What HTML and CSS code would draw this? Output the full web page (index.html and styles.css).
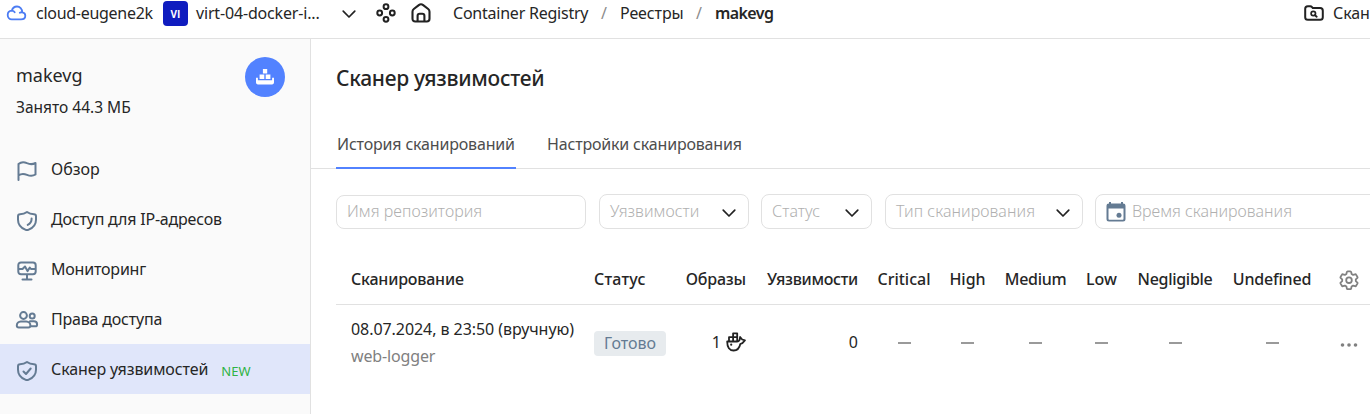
FILE: index.html
```html
<!DOCTYPE html>
<html lang="ru">
<head>
<meta charset="utf-8">
<title>Сканер уязвимостей</title>
<link rel="stylesheet" href="styles.css">
</head>
<body>
<svg class="defs" width="0" height="0">
  <symbol id="chevron" viewBox="0 0 16 16"><path d="M2.200 5.200L8 11l5.800-5.800" fill="none" stroke="#222" stroke-width="1.700" stroke-linecap="round" stroke-linejoin="round"/></symbol>
</svg>
<header class="topbar">
  <svg class="icon cloud" viewBox="0 0 20 16"><path d="M5.200 14.300h9.300c2.600 0 4.300-1.500 4.300-3.600 0-1.900-1.300-3.200-3.100-3.400C15.700 3.800 13.400 1.500 10.500 1.500 8 1.500 6 3 5.300 5.700 2.900 5.900 1.200 7.700 1.200 10c0 2.500 1.700 4.300 4 4.300zM5.300 5.700c1.200 0 2.200.5 2.900 1.500M15.700 7.300c-.9-.1-1.700.1-2.400.5" fill="none" stroke="#4c7cf3" stroke-width="1.800" stroke-linecap="round"/></svg>
  <span class="org">cloud-eugene2k</span>
  <span class="badge">VI</span>
  <span class="folder">virt-04-docker-i...</span>
  <svg class="icon top-chevron"><use href="#chevron"/></svg>
  <svg class="icon services" viewBox="0 0 20 20"><g fill="none" stroke="#222" stroke-width="2"><circle cx="10" cy="3.700" r="2.400"/><circle cx="3.700" cy="10" r="2.400"/><circle cx="16.300" cy="10" r="2.400"/><circle cx="10" cy="16.300" r="2.400"/></g></svg>
  <svg class="icon home" viewBox="0 0 20 20"><path d="M1.500 8.800c0-1.200.4-2.100 1.300-2.800l5-3.900c1.300-1 3.100-1 4.400 0l5 3.900c.9.700 1.300 1.600 1.300 2.800v7c0 1.700-1 2.700-2.700 2.700H4.200c-1.700 0-2.700-1-2.700-2.700zM6.600 18.300v-5.500c0-1.300.8-2.100 2.100-2.100h2.600c1.300 0 2.100.8 2.100 2.100v5.500" fill="none" stroke="#222" stroke-width="2.100"/></svg>
  <nav class="crumbs">
    <span class="crumb-service">Container Registry</span><i>/</i><span class="crumb-list">Реестры</span><i>/</i><b>makevg</b>
  </nav>
  <a class="scan">
    <svg class="icon scan-icon" viewBox="0 0 20 16"><path d="M1.200 3.800c0-1.700.9-2.600 2.600-2.600h2.400c.8 0 1.300.3 1.800.9l.8 1h7.400c1.700 0 2.600.9 2.600 2.600v6.500c0 1.700-.9 2.600-2.600 2.600H3.800c-1.700 0-2.600-.9-2.600-2.600z" fill="none" stroke="#222" stroke-width="2"/><circle cx="9.300" cy="8.500" r="2.200" fill="none" stroke="#222" stroke-width="1.700"/><path d="M11 10.200l1.700 1.500" stroke="#222" stroke-width="1.900" stroke-linecap="round"/></svg>
    <span>Скан</span>
  </a>
</header>
<div class="layout">
  <aside class="sidebar">
    <div class="registry">
      <div>
        <div class="registry-name">makevg</div>
        <div class="registry-size">Занято 44.3 МБ</div>
      </div>
      <div class="registry-logo"><svg viewBox="0 0 18 16" width="18" height="16"><path fill="#fff" d="M6.900 0h4.300v4.400H6.900zM3.600 5.600h4.700V10H3.600zM9.700 5.600h4.700V10H9.700zM0 8.800h1.900v2.400h14.200V8.800H18v4.500c0 1.300-.7 2.200-2 2.200H2c-1.300 0-2-.9-2-2.200z"/></svg></div>
    </div>
    <nav class="menu">
      <a class="item"><svg class="icon" viewBox="0 0 20 20"><path d="M1.500 19V3C4 .9 7 .8 10 2.200c3 1.300 5.900 1.200 8.500-.2v11.500c-2.600 1.700-5.500 1.700-8.500.3-3-1.300-6-1.200-8.500.5"/></svg><span class="m1">Обзор</span></a>
      <a class="item"><svg class="icon" viewBox="0 0 20 20"><path d="M10 1c2 1.500 4.500 2.200 7 2.200 1.300 0 2 .8 2 2v3.500c0 4.800-3.200 8.200-7.300 10a4 4 0 0 1-3.400 0C4.200 16.900 1 13.500 1 8.700V5.200c0-1.200.7-2 2-2C5.500 3.200 8 2.500 10 1zM14.600 7.500c.1 2.900-1.300 5-3.900 6.400"/></svg><span>Доступ для IP-адресов</span></a>
      <a class="item"><svg class="icon" viewBox="0 0 20 20"><path d="M4 1.500h12c1.700 0 2.700 1 2.700 2.700v6.300c0 1.700-1 2.700-2.700 2.700H4c-1.700 0-2.700-1-2.700-2.700V4.200c0-1.700 1-2.700 2.700-2.700zM1.500 8h4L8 5.500l2.500 4.600 2.300-3.600L14 8h4.500M10 13.200v5.300M5.500 18.500h9"/></svg><span>Мониторинг</span></a>
      <a class="item"><svg class="icon people" viewBox="0 0 22 18"><circle cx="7.500" cy="4.500" r="3.400"/><circle cx="16.200" cy="5" r="2.500"/><path d="M4.800 10.500h5.400c2.500 0 4.200 1.900 4.200 4 0 1.300-.8 2-2 2H2.800c-1.200 0-2-.7-2-2 0-2.100 1.600-4 4-4zM14 10.200h3.800c2 0 3.300 1.500 3.300 3.200 0 1.200-.7 1.900-1.800 1.900h-4.500"/></svg><span>Права доступа</span></a>
      <a class="item active"><svg class="icon" viewBox="0 0 20 20"><path d="M10 1c2 1.500 4.500 2.200 7 2.200 1.300 0 2 .8 2 2v3.500c0 4.800-3.200 8.200-7.300 10a4 4 0 0 1-3.400 0C4.200 16.900 1 13.500 1 8.700V5.200c0-1.200.7-2 2-2C5.500 3.200 8 2.500 10 1zM6.500 10.500L9 13l4.700-5.500"/></svg><span class="m5">Сканер уязвимостей</span><em>NEW</em></a>
    </nav>
  </aside>
  <main class="main">
    <h1>Сканер уязвимостей</h1>
    <div class="tabs">
      <a class="tab tab-active">История сканирований</a>
      <a class="tab">Настройки сканирования</a>
    </div>
    <div class="filters">
      <div class="field repo"><span>Имя репозитория</span></div>
      <div class="field vuln"><span>Уязвимости</span><svg class="icon"><use href="#chevron"/></svg></div>
      <div class="field status"><span>Статус</span><svg class="icon"><use href="#chevron"/></svg></div>
      <div class="field type"><span>Тип сканирования</span><svg class="icon"><use href="#chevron"/></svg></div>
      <div class="field time"><svg class="calendar" viewBox="0 0 20 20"><path fill="#647b93" fill-rule="evenodd" d="M3 0h2v1.500h10V0h2v1.500c1.700 0 2.500.8 2.500 2.500v13c0 1.700-.8 2.500-2.500 2.500H3C1.300 19.500.5 18.700.5 17V4c0-1.700.8-2.500 2.500-2.500zM2.500 6.500V17c0 .5.200.7.700.7h13.600c.5 0 .7-.2.700-.7V6.500z"/><circle cx="13" cy="13.300" r="2.500" fill="#647b93"/></svg><span>Время сканирования</span></div>
    </div>
    <div class="table">
      <div class="row head">
        <div><span class="tight">Сканирование</span></div>
        <div><span class="loose">Статус</span></div>
        <div class="right"><span class="tight">Образы</span></div>
        <div class="right"><span class="tighter">Уязвимости</span></div>
        <div class="mid"><span>Critical</span></div>
        <div class="mid"><span>High</span></div>
        <div class="mid"><span class="tighter">Medium</span></div>
        <div class="mid"><span>Low</span></div>
        <div class="mid"><span class="tighter">Negligible</span></div>
        <div class="mid"><span class="tight">Undefined</span></div>
        <div class="mid"><svg class="gear" viewBox="0 0 20 20"><path d="M8.700 1.300h2.600c.5 0 .8.300.9.800l.4 1.900 1.500.9 1.900-.6c.5-.1.900 0 1.100.4l1.300 2.200c.2.400.2.900-.2 1.200l-1.400 1.300v1.700l1.400 1.300c.4.300.4.800.2 1.200l-1.300 2.200c-.2.400-.6.500-1.100.4l-1.900-.6-1.500.9-.4 1.900c-.1.500-.4.800-.9.800H8.700c-.5 0-.8-.3-.9-.8l-.4-1.900-1.500-.9-1.900.6c-.5.100-.9 0-1.100-.4l-1.300-2.200c-.2-.4-.2-.9.200-1.200l1.400-1.300V9.400L1.800 8.100c-.4-.3-.4-.8-.2-1.200l1.300-2.200c.2-.4.600-.5 1.100-.4l1.900.6L7.400 4l.4-1.900c.1-.5.400-.8.900-.8z"/><circle cx="10" cy="10.200" r="2.800"/></svg></div>
      </div>
      <div class="row body">
        <div class="scan-cell"><span class="date">08.07.2024, в 23:50 (вручную)</span><span class="image-name">web-logger</span></div>
        <div><span class="label">Готово</span></div>
        <div class="right images"><span>1</span><svg class="docker" viewBox="0 0 20 20"><g fill="none" stroke="#222" stroke-width="1.800" stroke-linejoin="round"><path d="M1.200 9.500h9.600c1.700 0 2.800-.8 3-2.300l.3-2.200 2.100 2.500 2.700.9-2.500 2.700-2.100.9c-.8 4-3.100 6.500-6.700 6.500-4 0-6.500-3.200-6.400-9z"/><path d="M3 9.300V5.200h8.200v4.100M7.100 9.300V1.300h4.100v4"/></g><circle cx="5.200" cy="12.700" r="1.100" fill="#222"/></svg></div>
        <div class="right"><span>0</span></div>
        <div class="mid"><i class="dash"></i></div>
        <div class="mid"><i class="dash"></i></div>
        <div class="mid"><i class="dash"></i></div>
        <div class="mid"><i class="dash"></i></div>
        <div class="mid"><i class="dash"></i></div>
        <div class="mid"><i class="dash"></i></div>
        <div class="mid"><svg class="dots" viewBox="0 0 18 4"><g fill="#808080"><circle cx="2.500" cy="2" r="1.800"/><circle cx="9" cy="2" r="1.800"/><circle cx="15.500" cy="2" r="1.800"/></g></svg></div>
      </div>
    </div>
  </main>
</div>
</body>
</html>
```
FILE: styles.css
```css
* { box-sizing: border-box; }
body {
  margin: 0;
  width: 1370px;
  height: 414px;
  overflow: hidden;
  background: #fff;
  color: #262626;
  font: 16px/20px "Noto Sans", "Open Sans", sans-serif;
  white-space: nowrap;
}
.defs { display: none; }
svg { display: block; flex: none; }
i, em { font-style: normal; }

.topbar { display: flex; align-items: center; height: 39px; padding: 0 0 12px 6px; border-bottom: 1px solid #e1e1e1; overflow: hidden; }
.cloud { width: 21px; height: 16px; }
.org { width: 118px; margin-left: 9px; letter-spacing: -0.28px; }
.badge { width: 25px; height: 25px; margin-left: 9px; border-radius: 4px; background: #0f1cbf; color: #fff; font-family: "Open Sans", sans-serif; font-size: 10px; font-weight: 700; line-height: 26px; text-align: center; }
.folder { width: 126px; margin-left: 8px; letter-spacing: -0.17px; }
.top-chevron { width: 16px; height: 16px; margin: 2px 0 0 19px; }
.services { width: 20px; height: 20px; margin-left: 19px; }
.home { width: 20px; height: 20px; margin: 0 0 0 15px; }
.crumbs { display: flex; margin-left: 22px; }
.crumbs i { width: 32px; color: #8c8c8c; text-align: center; }
.crumbs b { font-weight: 600; letter-spacing: -0.6px; }
.crumb-service { width: 135px; letter-spacing: -0.23px; }
.crumb-list { width: 63px; letter-spacing: -0.12px; }
.scan { display: flex; align-items: center; width: 66px; margin-left: auto; }
.scan-icon { width: 20px; height: 16px; margin-right: 9px; }
.scan span { letter-spacing: -0.1px; }

.layout { display: flex; height: 375px; }
.sidebar { width: 311px; background: #fafafa; border-right: 1px solid #e1e1e1; }
.registry { display: flex; justify-content: space-between; padding: 18px 25px 0 16px; height: 105px; }
.registry-name { margin-top: 8px; font-size: 18px; }
.registry-size { margin-top: 12px; font-size: 15.5px; }
.registry-logo { display: flex; align-items: center; justify-content: center; width: 40px; height: 40px; border-radius: 50%; background: #5282ff; }
.item { display: flex; align-items: center; height: 50px; padding-left: 17px; letter-spacing: -0.2px; }
.item .icon { width: 20px; height: 20px; margin: 3px 14px 0 0; fill: none; stroke: #647b93; stroke-width: 2; stroke-linecap: round; stroke-linejoin: round; overflow: visible; }
.item .people { width: 22px; height: 18px; margin: 1px 13px 0 -1px; }
.item em { margin: 3px 0 0 13px; color: #2fb344; font-size: 13px; letter-spacing: 0.1px; }
.item .m1 { letter-spacing: 0; }
.item .m5 { letter-spacing: -0.11px; }
.active { background: #e0e6fa; }

.main { width: 1059px; overflow: hidden; }
h1 { margin: 0; padding: 25px 0 0 25px; font-size: 21px; line-height: 28px; font-weight: 500; letter-spacing: -0.27px; }
.tabs { display: flex; gap: 31px; height: 77px; padding: 29px 0 0 25px; border-bottom: 1px solid #e1e1e1; }
.tab { height: 48px; padding-top: 13px; color: #4d4d4d; letter-spacing: -0.18px; }
.tab-active { width: 180px; padding-left: 1px; border-bottom: 2px solid #5282ff; }
.filters { display: flex; align-items: flex-end; height: 60px; padding-left: 25px; }
.field { display: flex; flex: none; align-items: center; justify-content: space-between; height: 35px; margin-right: 12px; padding: 0 10px 2px; border: 1px solid #e1e1e1; border-radius: 8px; color: #b0b0b0; font-weight: 300; letter-spacing: 0.06px; }
.field .icon { width: 16px; height: 16px; margin: 4px 1px 0 0; }
.repo { width: 250px; height: 34px; margin-right: 13px; }
.vuln { width: 150px; }
.status { width: 111px; margin-right: 13px; }
.type { width: 198px; }
.time { width: 300px; justify-content: flex-start; letter-spacing: 0; }
.calendar { width: 20px; height: 20px; margin: 2px 6px 0 0; }

.table { width: 1060px; margin: 26px 0 0 25px; }
.row { display: grid; grid-template-columns: 248px 92px 80px 112px 72px 55px 81px 51px 96px 98px 56px; align-items: center; }
.row > div { padding: 0 10px; }
.row > div:first-child { padding-left: 15px; }
.head { height: 50px; font-weight: 500; border-bottom: 1px solid #e1e1e1; }
.head span { display: block; margin-top: -2px; }
.tight { letter-spacing: -0.2px; }
.tighter { letter-spacing: -0.3px; }
.loose { letter-spacing: 0.2px; }
.body { height: 76px; }
.right { display: flex; justify-content: flex-end; }
.row > .mid { display: flex; justify-content: center; padding: 0; }
.gear { width: 20px; height: 20px; fill: none; stroke: #808080; stroke-width: 1.8; stroke-linejoin: round; }
.scan-cell { display: flex; flex-direction: column; gap: 7px; margin-top: -1px; }
.date { letter-spacing: -0.06px; }
.image-name { color: #808080; letter-spacing: -0.15px; }
.label { display: block; width: 72px; height: 25px; margin-top: 1px; border-radius: 4px; background: #e7ebee; color: #647b93; line-height: 25px; text-align: center; }
.images { gap: 5px; align-items: center; }
.right span { margin-top: -2px; }
.docker { width: 20px; height: 20px; margin-top: -3px; }
.dash { width: 13px; height: 2px; background: #9a9a9a; }
.dots { width: 18px; height: 4px; margin-top: 3px; }
```
